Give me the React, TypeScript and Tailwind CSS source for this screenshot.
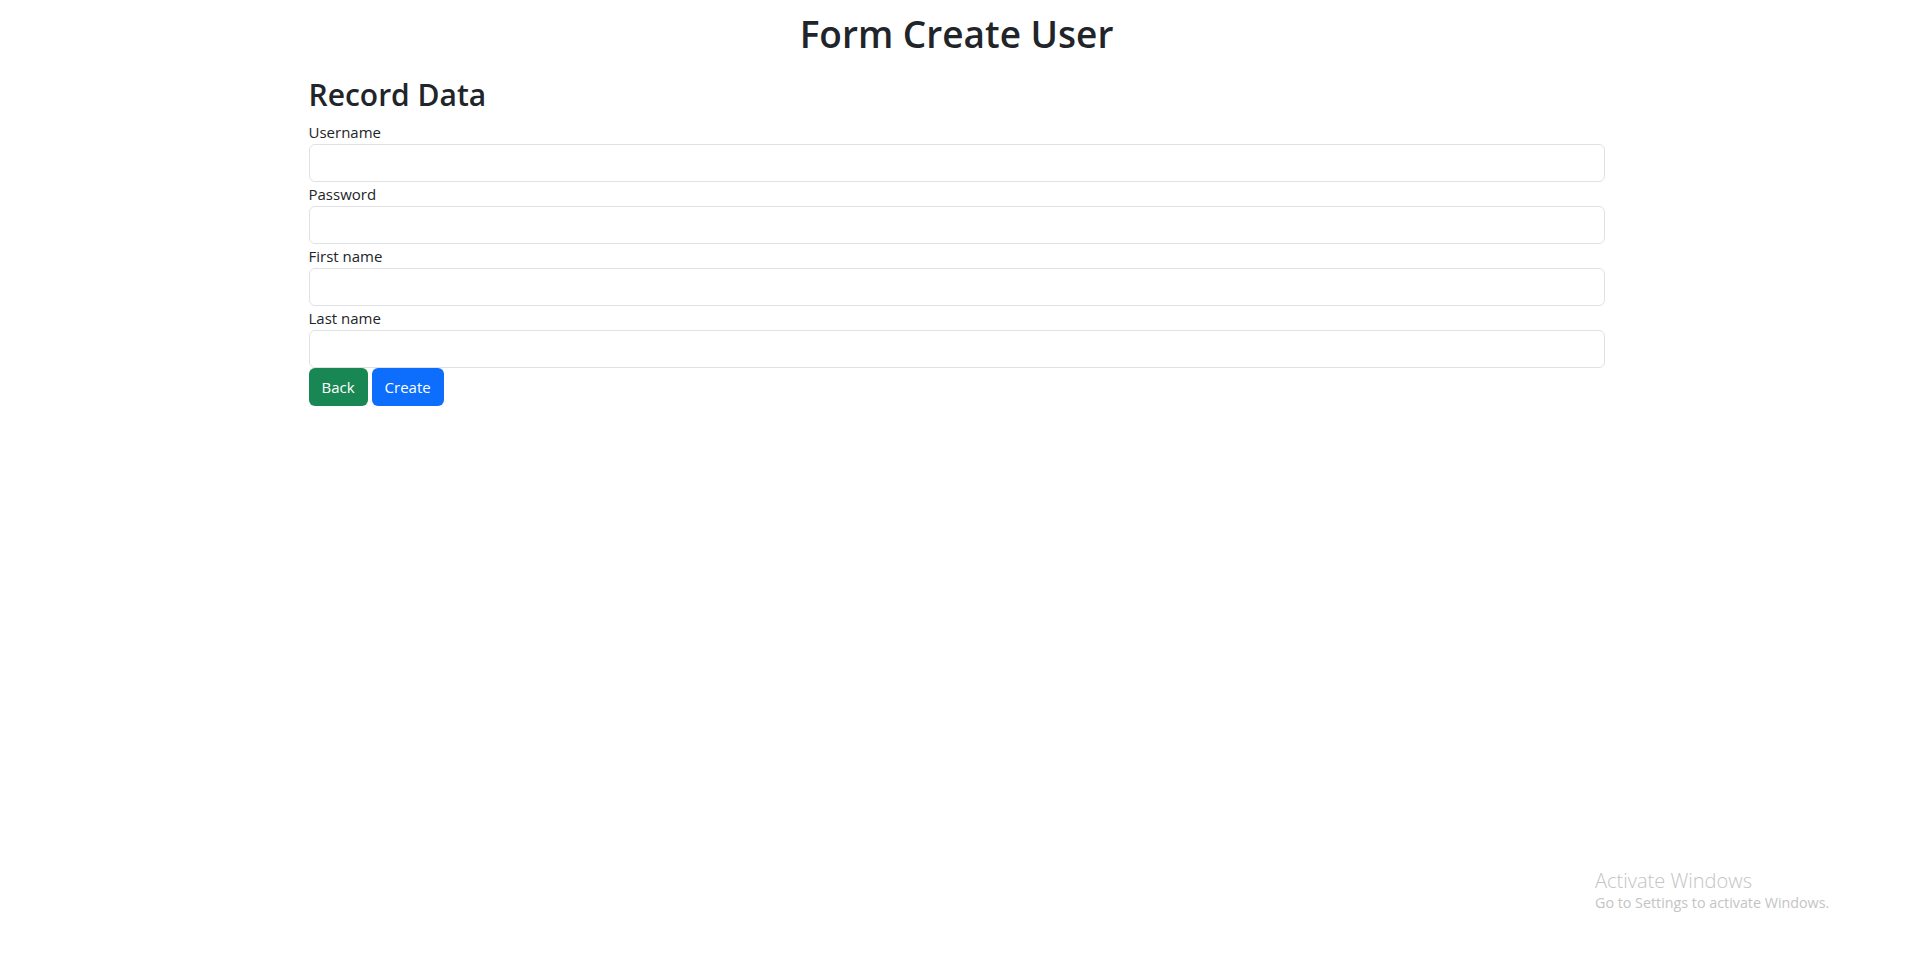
const fields = [
  { label: 'Username', type: 'text' },
  { label: 'Password', type: 'password' },
  { label: 'First name', type: 'text' },
  { label: 'Last name', type: 'text' },
]

export default function App() {
  return (
    <div
      className="relative min-h-[958px] bg-white text-[#212529]"
      style={{ fontFamily: '"Open Sans", "Noto Sans", sans-serif' }}
    >
      <div className="mx-auto w-full max-w-[1320px] px-3">
        <h1 className="mt-2.5 mb-2 text-center text-[37px] leading-[48px] font-semibold">
          Form Create User
        </h1>
        <h2 className="mt-[18px] mb-1.5 text-[30px] leading-[38px] font-semibold">Record Data</h2>
        <form onSubmit={(e) => e.preventDefault()}>
          {fields.map((field) => (
            <div key={field.label}>
              <label className="block text-[15px] leading-6">{field.label}</label>
              <input
                type={field.type}
                className="block h-[38px] w-full rounded-[6px] border border-[#dee2e6] bg-white px-3 text-base outline-none"
              />
            </div>
          ))}
          <div className="flex gap-1">
            <button
              type="button"
              className="h-[38px] rounded-[6px] bg-[#198754] px-[13px] text-[15px] text-white"
            >
              Back
            </button>
            <button
              type="submit"
              className="h-[38px] rounded-[6px] bg-[#0d6efd] px-[13px] text-[15px] text-white"
            >
              Create
            </button>
          </div>
        </form>
      </div>

      <div className="absolute top-[859px] left-[1595px] text-[#c4c4c4]">
        <div className="text-[20px] leading-6 font-light">Activate Windows</div>
        <div className="text-[14.3px] leading-5">Go to Settings to activate Windows.</div>
      </div>
    </div>
  )
}
